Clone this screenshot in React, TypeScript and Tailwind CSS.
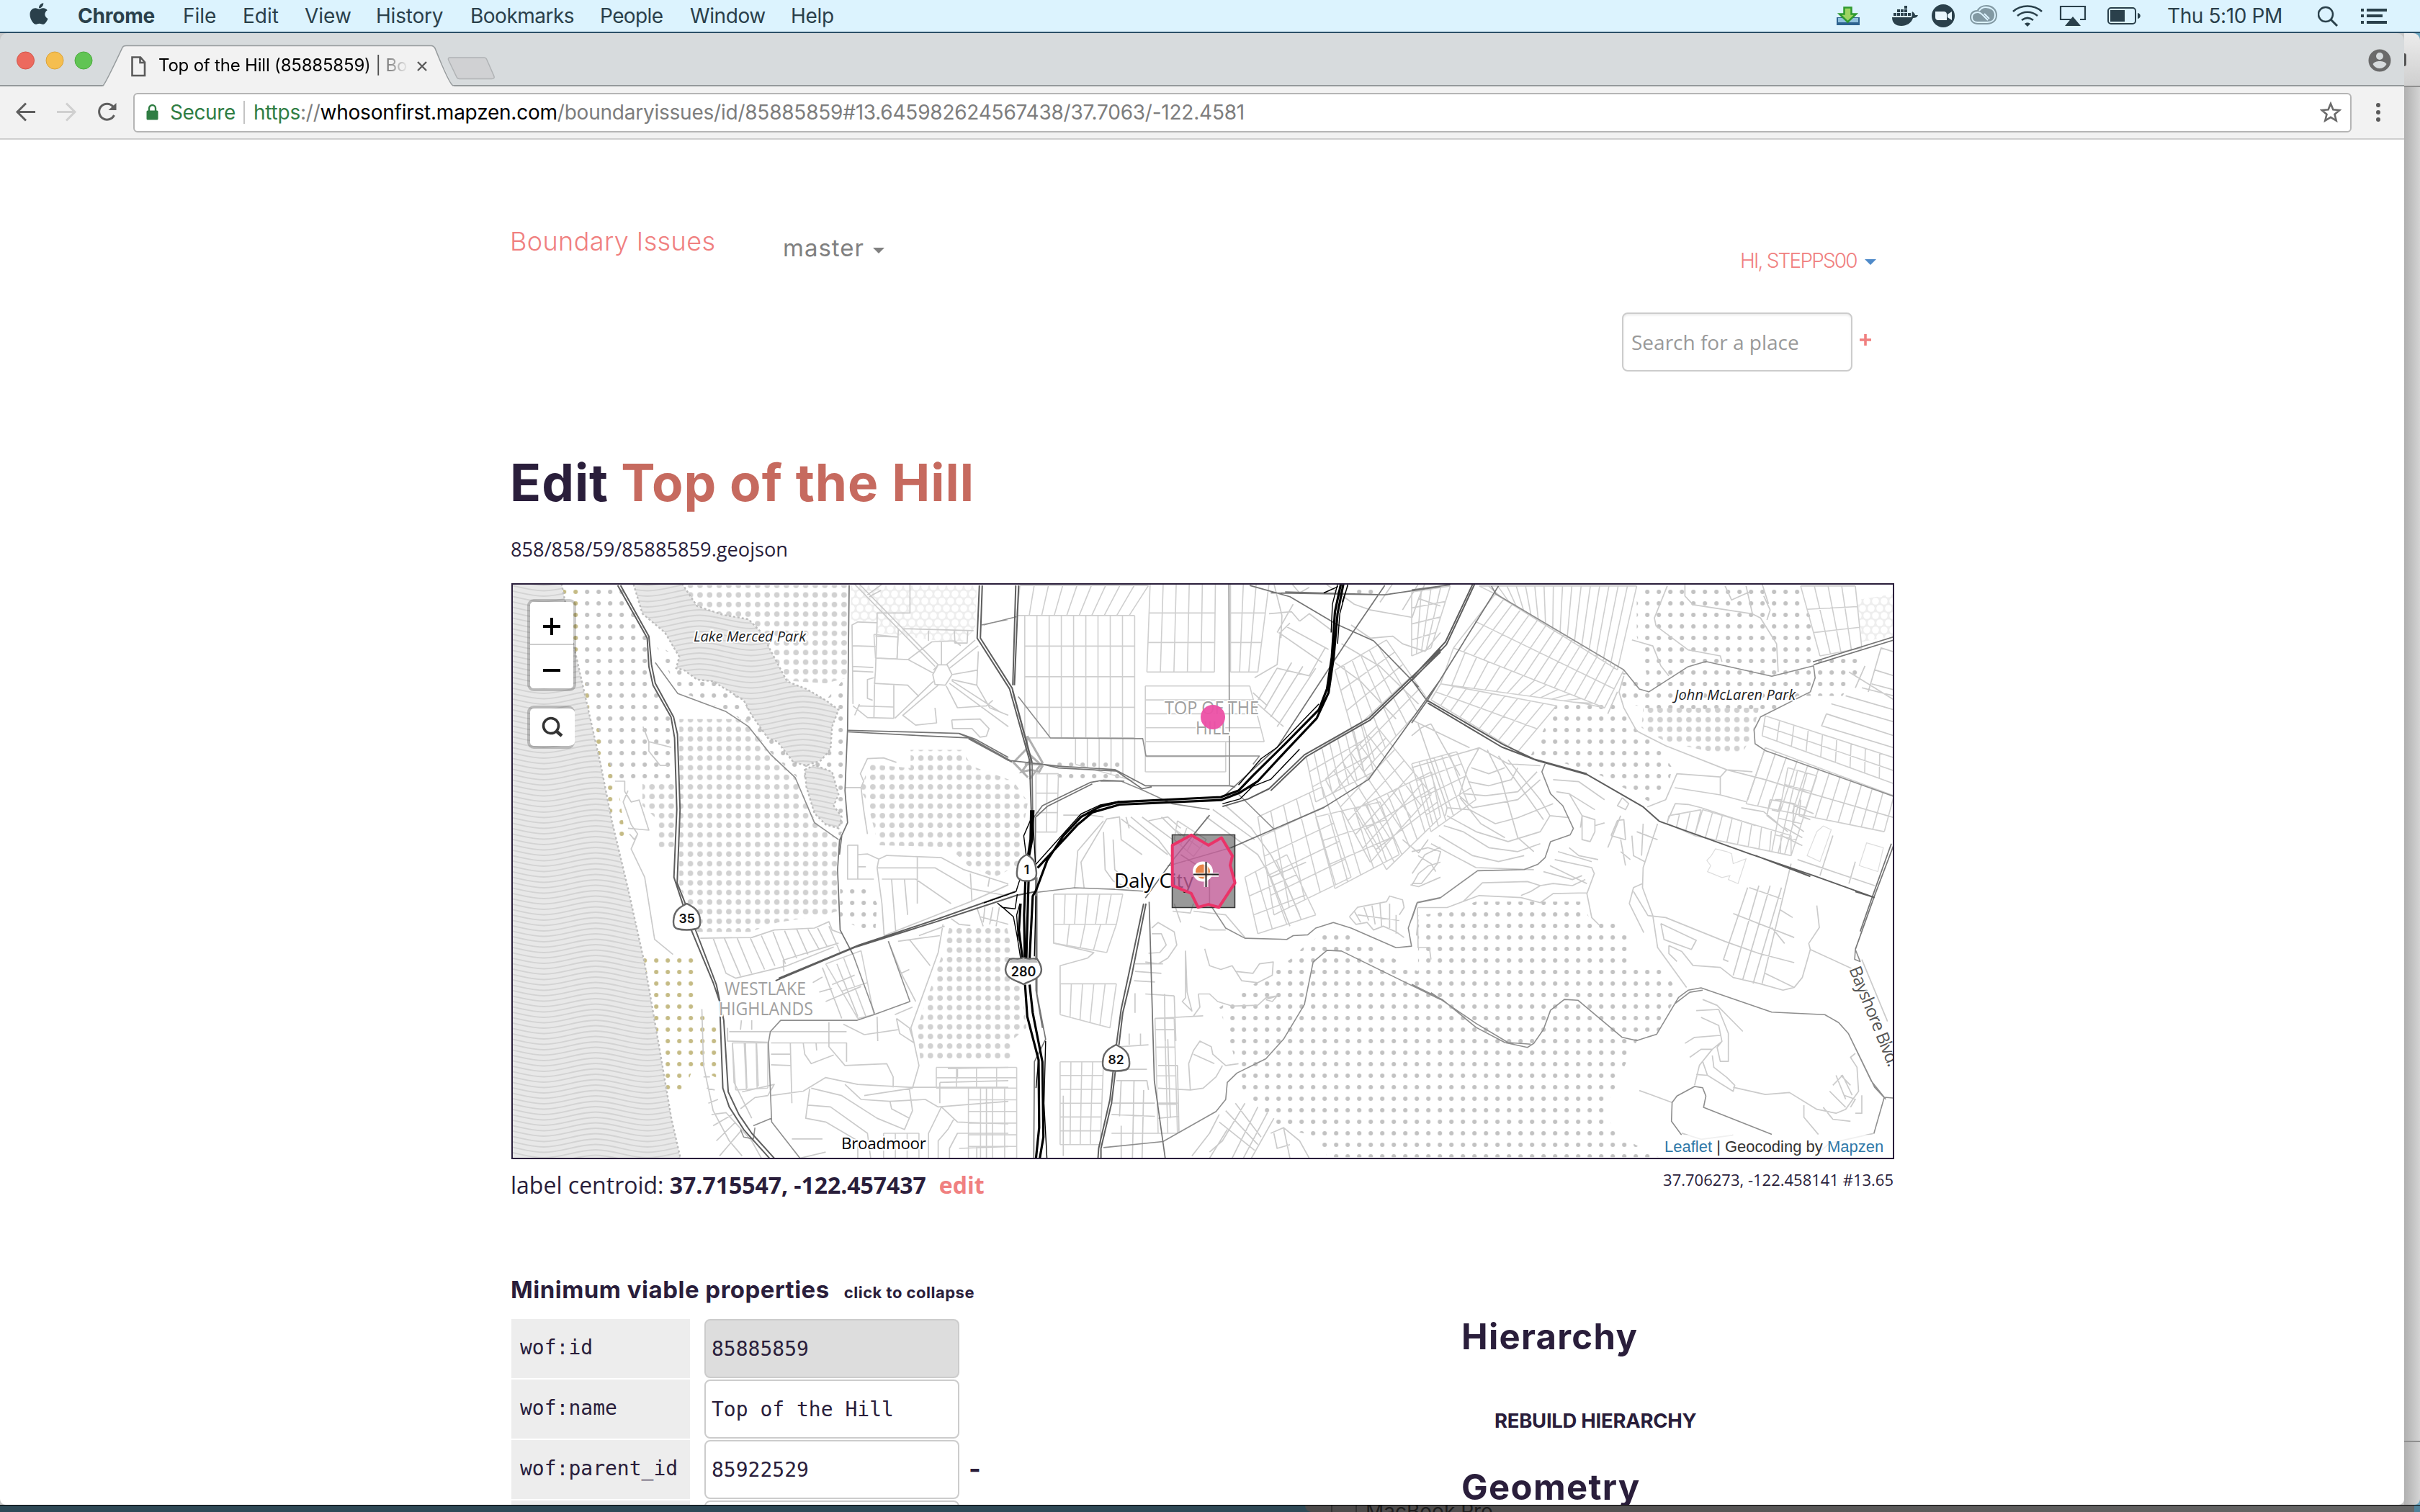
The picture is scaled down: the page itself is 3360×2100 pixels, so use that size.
import React from "react";
import { FaApple } from "react-icons/fa";

type Frame = [number, number, number, number];
type Pt = [number, number];

/* Survey sheets: origin and scale of each sheet on the page */
const W: Frame = [700, 800, 0.4464, 0.523];
const M: Frame = [1300, 800, 0.4464, 0.523];
const E: Frame = [1960, 800, 0.4464, 0.5548];

const project = (f: Frame, p: Pt): Pt => [f[0] + p[0] * f[2], f[1] + p[1] * f[3]];
const parse = (s: string): Pt[] =>
  s.trim().split(/\s+/).map((q) => q.split(",").map(Number) as Pt);
const toPath = (pts: Pt[]) =>
  "M" + pts.map((p) => p[0].toFixed(1) + " " + p[1].toFixed(1)).join("L");
const lines = (f: Frame, s: string) =>
  s.split("|").map((l) => toPath(parse(l).map((p) => project(f, p)))).join("");
const area = (f: Frame, s: string) =>
  s.split("|").map((l) => toPath(parse(l).map((p) => project(f, p))) + "Z").join("");

/* Street blocks: corners clockwise, then number of columns and rows */
const mix = (a: Pt, b: Pt, t: number): Pt => [a[0] + (b[0] - a[0]) * t, a[1] + (b[1] - a[1]) * t];
const blocks = (f: Frame, list: [string, number, number][]) =>
  list
    .map(([s, n, m]) => {
      const [a, b, c, d] = parse(s).map((p) => project(f, p));
      let out = "";
      for (let i = 0; i <= n; i++) out += toPath([mix(a, b, i / n), mix(d, c, i / n)]);
      for (let j = 0; j <= m; j++) out += toPath([mix(a, d, j / m), mix(b, c, j / m)]);
      return out;
    })
    .join("");

const minorW = lines(
  W,
  `1262,20 1262,98 1160,98|1085,340 1082,130 1100,122 1160,124 1160,98|1160,124 1155,250 1152,285 1150,375|1082,185 1155,187|1082,240 1148,243|1082,252 1148,255|1155,160 1225,162|1226,140 1222,220|1155,218 1256,222 1330,175 1400,172 1420,185|1085,345 1130,376 1212,378|1212,290 1212,378|1150,285 1255,290 1290,320|1100,345 1212,348|1090,370 1105,340|1150,270 1130,275 1130,325 1146,330|1240,140 1460,145|1320,145 1320,172|1400,145 1402,178 1440,178 1442,145|1360,172 1360,235|1256,222 1335,258|1375,236 1465,170|1385,245 1475,185|1392,262 1470,250|1392,275 1470,290 1475,200|1335,280 1215,378|1350,290 1240,370 1280,396 1345,390 1340,350|1375,292 1410,350 1500,345 1520,330|1385,285 1568,400|1392,278 1540,360|1470,290 1510,350 1568,370|1090,22 1340,240|1105,22 1350,236|1130,50 1175,22|1135,55 1172,38|1335,250 1350,236 1378,236 1393,262 1372,290 1340,288 1333,262 1350,236|1392,382 1480,380 1508,405 1500,425 1480,428 1455,405 1395,405 1392,382|1060,562 1110,562 1118,545 1108,525 1130,485 1180,483 1220,495|1110,562 1118,620 1130,685|1068,715 1100,715 1100,805 1068,805 1068,715|1100,740 1130,738 1165,752 1190,742 1360,748 1430,780 1568,818|1165,752 1160,775 1340,775 1450,830 1568,850|1160,775 1175,870 1182,955 1450,865 1568,820|1175,805 1280,805 1390,870|1205,805 1218,945|1245,805 1255,900|1285,745 1285,870|1450,790 1455,865|1510,800 1505,825|1100,772 1125,772|1068,805 1150,805|610,962 770,960 840,940 965,935 1010,918 1020,940 1050,950|650,962 690,1055 720,1068 880,1035 1025,985|685,962 735,1062|725,962 770,1055|765,960 810,1045|800,955 842,1035|835,942 875,1030|872,942 910,1015|910,938 945,1005|945,938 980,992|975,935 1005,985|1010,930 1045,1000|870,1050 868,1020 1040,975|960,1080 990,1065|980,1105 1020,1095|1000,1130 1110,1090|990,1040 1050,1175|1035,1030 1100,1170|1020,1085 1090,1060|695,1200 695,1235 820,1238|700,1210 1065,1210|738,1180 735,1205|770,1180 770,1205|710,1240 715,1345 770,1440|750,1240 755,1360|785,1240 790,1355|890,1240 895,1400|830,1270 890,1270|830,1298 890,1300|830,1240 1065,1240 1065,1290|1010,1185 1010,1250 1060,1300 1190,1295 1210,1330 1210,1358|930,1240 935,1270 955,1295 1025,1272|970,1240 972,1260|1055,1190 1120,1218 1225,1205|1160,1170 1162,1235|740,1370 840,1350 820,1380 780,1385 735,1415|830,1380 930,1368 1000,1332 1100,1350 1260,1358 1568,1358|950,1362 938,1440 1000,1450 1100,1500 1100,1546|945,1405 1015,1410 1130,1480 1140,1546|1060,1350 1110,1390 1200,1395 1310,1390 1350,1410 1568,1395|955,1360 1050,1380 1160,1440 1245,1470 1270,1420 1260,1360|1200,1395 1205,1415 1260,1440|1120,1380 1270,1360 1290,1300 1265,1200 1350,1000 1365,925|1320,1546 1320,1480 1360,1410 1410,1450 1568,1455|1350,1546 1350,1500 1380,1470 1400,1440|1385,1546 1385,1520 1410,1480 1568,1480|1415,1520 1568,1515|1470,1546 1470,1515|1500,1546 1500,1360|1380,1308 1568,1305|1410,1308 1410,1335|1355,1345 1568,1340|1355,1345 1355,1400|615,1150 620,1300 650,1420 700,1500 740,1540|620,1330 640,1330|630,1360 655,1365|635,1400 665,1390|645,1430 690,1425 770,1500 800,1546|650,1460 710,1430|660,1500 720,1450|670,1540 740,1470|895,1495 990,1495|920,1546 1000,1530|1195,970 1235,1055 1260,1045|1260,965 1325,1035|1290,955 1370,930 |1225,970 1355,955|1220,1175 1260,1200 1275,1240 1230,1215 1220,1175|1215,1165 1270,1145|1235,1055 1280,1130|1470,880 1490,930|1495,880 1490,920|1520,880 1510,925|1540,880 1530,930|1480,905 1568,925|1390,910 1415,925 1450,928|432,400 450,440 520,455|450,440 450,465 485,503 512,503|345,545 375,545 375,572 395,600 420,595 450,675 385,670|385,570 370,600 395,660 415,685 405,700 390,685|415,685 395,725 437,800 468,965 525,1005`
);
const minorM = lines(
  M,
  `1050,20 1075,105 1072,165|1035,100 1105,95 1130,120|1105,20 1130,45 1160,30|1130,120 1160,100 1230,145|990,270 1060,235 1070,150 1100,125|1110,75 1060,150|1065,150 1200,230|1090,135 1220,195|1000,330 1060,245 1160,265 1210,190|1020,355 1105,230|1040,375 1140,240|1060,400 1180,245|1000,340 1080,400|985,310 1030,345|365,845 365,975 490,1000 470,1015 385,1035 385,1160|395,635 480,635 520,640|430,830 440,730 520,650|460,830 450,760 530,645 570,640 575,700 640,740|520,680 525,780 550,810 600,830|550,700 555,780 600,815 640,830|575,645 720,740|605,640 690,700 730,745|640,640 735,700|600,670 590,640|660,650 720,640 760,670|700,640 760,690|840,640 1000,740 1040,800 1100,930|860,620 990,700|900,610 980,670 1040,740 1090,820 1130,900|735,890 790,895 800,870|760,920 740,870|800,890 900,900 960,960|820,930 850,940 900,940|670,935 690,920 740,945 748,980 720,1015 690,1030 650,1025|670,950 700,950 715,980 695,1000 660,1002|618,1030 705,1030|618,1050 700,1055|615,1075 680,1078|775,995 775,1120 765,1130 795,1155 780,1105 775,995|835,990 850,1035 885,1045 920,1035 950,1075 1000,1080 1045,1060 1048,1025 1005,1030 985,1055 930,1050|815,1110 850,1110 875,1130 920,1142 1000,1140 1025,1120 1060,1115|815,1110 820,1145 800,1168|1025,1125 1060,1115 1045,1130 1025,1125|618,1108 618,1160|650,1110 740,1115|710,1110 712,1235|740,1115 745,1235|680,1175 830,1168|680,1205 740,1205|785,1295 800,1260 820,1235 855,1250 860,1270 900,1300 940,1295|785,1295 790,1365 830,1360 870,1330 890,1300|800,1270 865,1295|690,1300 750,1300 755,1480|720,1230 728,1440|690,1360 790,1365|690,1400 750,1400|690,1440 755,1435|560,1340 655,1340 660,1365|545,1430 680,1435|545,1400 680,1400|570,1250 660,1245|600,1215 600,1245|635,1215 635,1245|570,1310 655,1310|575,1340 570,1435|615,1340 610,1546|645,1365 640,1546|575,1460 575,1546|545,1480 690,1480|795,1540 850,1480 880,1430|850,1546 905,1470|880,1450 990,1525|900,1420 1000,1510|930,1400 1010,1490|960,1400 890,1500 850,1530|1000,1410 920,1546|1030,1425 955,1546|1050,1440 980,1546|1040,1480 1080,1465 1130,1500 1160,1546|1080,1465 1100,1546|1050,1480 1060,1520 1100,1510|1210,20 1300,75 1350,90 1480,110 1500,60 1568,80|1380,70 1420,20|1450,90 1500,20|1500,60 1520,20|1290,130 1350,165 1420,160 1450,180 1520,200 1568,150|1240,230 1320,280 1430,380|1260,180 1380,240 1500,340|1285,905 1310,880 1400,865 1410,850 1450,860 1455,880 1440,900|1285,905 1305,925 1340,920 1360,940 1390,930 1430,945 1455,960|1300,890 1320,920|1330,880 1345,915|1355,875 1365,925|1380,870 1385,930|1410,870 1410,935|1430,900 1430,950|1310,900 1440,915|1480,820 1500,790 1530,770 1568,760|1475,820 1500,825 1568,800|1480,790 1520,740 1568,720|1450,700 1500,735 1530,700|1040,800 1150,760|395,1380 395,1540`
);
const minorE = lines(
  E,
  `0,480 210,430 300,470 400,475|210,430 175,480 148,550 190,580 330,560 400,510|185,480 240,495 290,480|175,515 240,525 310,510 330,480|160,545 230,550 330,540 390,490|235,435 275,500 330,655 380,690|270,450 340,530 410,610|300,460 400,560 430,600|150,555 215,620 290,655|110,580 180,585 260,620 330,605 440,570|110,600 200,640 300,665 400,640 430,600|100,625 160,640 240,680 330,690 400,670|85,650 190,700 270,715 350,700|60,670 200,730 380,735|0,690 50,680 90,690 80,720 30,770 0,770|20,700 60,720 75,740|0,400 30,380 60,370|0,360 180,430|20,370 110,580 105,600|60,370 150,500|440,510 520,515 600,560|450,540 490,545 570,585|490,545 530,600 525,630|530,600 530,660 555,665 570,640 570,610 530,600|570,625 600,618|430,600 490,605|455,690 560,715|445,710 560,730 568,745 545,795 560,855 585,875|430,725 545,770|410,740 500,760 530,750|490,680 520,700 580,710|20,830 110,830 210,800 340,805 400,818 440,795 545,793|160,815 220,768 360,765 400,775 440,770 500,775 540,760|340,800 370,790 400,775|655,555 675,570 665,585 640,575 655,555|620,650 640,612 660,610 665,660 620,650|610,680 650,600|650,660 665,725|685,650 690,700 725,715|700,640 765,660|720,620 715,700|650,690 680,710|765,620 720,730 718,780 750,850 765,930 855,1030|718,770 690,780 677,820 722,893|690,790 735,850 790,855 975,915 1080,945 1190,968|775,870 885,912 870,935 785,910 775,870|800,925 840,940 875,975 960,980 1000,1005 1080,1020 1155,1037 1190,1030 1215,1005 1240,935 1235,920 1268,880 1260,825|1240,935 1375,985|800,925 800,945 825,965|980,485 1100,510 1200,535 1330,565 1500,605|980,485 1060,490|818,530 960,548 1040,565|733,578 790,560 825,495 960,503 960,548|960,503 980,485|795,615 820,570 860,572 900,580 1070,625|1025,580 1095,590 1140,620|1045,560 1100,430|1000,845 1190,905|1050,780 1150,808|1045,780 970,960 985,965|1080,775 1000,1000|1115,775 1030,1010|1150,780 1062,1020|1180,720 1090,1020|1145,835 1185,855|1120,880 1160,920|1100,995 1190,1030|1200,710 1440,775|1380,715 1360,770|1310,650 1270,750|885,1088 955,1085 985,1145 985,1215 960,1215 950,1180 965,1165 955,1125 900,1105|905,1060 950,1075 1030,1140|850,1170 880,1155 960,1150|865,1205 900,1185 935,1185 965,1165|880,1275 895,1225 935,1185|885,1248 920,1250 1000,1290 1005,1275 980,1255 940,1230 935,1200|905,1215 920,1250|1000,1280 1100,1298 1175,1293 1260,1335 1320,1345 1350,1335 1390,1290 1385,1230 1365,1205 1380,1195|1310,1275 1340,1250 1370,1300|1320,1250 1350,1310|1300,1290 1350,1330|1335,1250 1365,1275|1345,1300 1380,1310 1365,1330|1280,1330 1310,1360 1365,1365|1400,1300 1400,1345 1380,1345|1220,1325 1220,1355 1265,1398|708,1288 810,1318|840,1395 900,1410 1000,1400|1250,1455 1300,1420 1440,1395 |1400,960 1480,1115|1115,560 1105,600 1170,640|1115,560 1190,570 1185,620 1220,640|1130,560 1150,560 1140,590 1120,585|1190,575 1250,595|1210,560 1205,600 1240,610|1160,630 1215,655|1150,650 1215,675|1290,345 1500,400|1290,345 1275,375 1500,430|1305,320 1500,365|1350,300 1500,335|1360,240 1500,310|1380,280 1410,225|1440,235 1500,250|1430,270 1500,285|1400,280 1500,300|1420,290 1460,180 1500,190|850,20 850,50 875,72 1060,95 1085,105 1135,170 1140,240|795,25 755,105 760,125 860,185 960,200 965,215|685,160 750,175 775,225 800,250|1060,95 1040,25|975,25 995,60 1050,40|1095,50 1115,85 1105,110|1090,20 1110,70|660,250 645,290 660,330 700,388 790,425 980,485|640,290 610,345|18,830 20,930 55,930 60,960|20,860 15,900`
);
const grids =
  blocks(M, [
    ["275,105 617,105 617,430 275,430", 9, 4],
    ["433,430 617,430 617,545 433,500", 5, 1],
    ["665,20 868,20 865,255 655,255", 5, 3],
    ["915,20 1035,20 1000,255 915,255", 3, 3],
    ["650,292 975,292 1020,440 650,440", 1, 4],
    ["650,440 900,440 900,520 650,520", 1, 2],
    ["260,25 660,25 600,105 250,105", 9, 1],
    ["365,845 580,845 560,925 365,925", 6, 1],
    ["365,925 560,925 530,1000 365,975", 4, 1],
    ["385,1083 560,1083 540,1200 385,1165", 5, 1],
    ["385,1290 520,1290 510,1510 385,1510", 4, 6],
    ["0,1305 250,1305 250,1360 0,1360", 4, 2],
    ["100,1360 250,1360 250,1546 100,1546", 4, 6],
    ["1000,640 1200,560 1290,800 1050,900", 5, 5],
    ["1210,540 1370,400 1540,580 1350,760", 6, 6],
    ["1240,250 1400,170 1530,330 1330,520", 6, 5],
    ["1150,480 1320,390 1360,520 1180,600", 7, 3],
    ["1300,620 1540,520 1568,640 1400,780", 7, 3],
    ["1180,640 1380,600 1440,740 1240,830", 5, 3],
    ["310,525 380,525 375,680 310,680", 2, 3],
    ["960,800 1090,740 1180,900 1000,950", 4, 3],
    ["680,1175 740,1175 750,1480 690,1480", 2, 4],
    ["750,650 840,700 800,745 740,700", 3, 2],
  ]) +
  blocks(E, [
    ["260,45 660,235 600,330 130,180", 15, 2],
    ["210,25 700,25 640,235 260,45", 17, 1],
    ["130,180 600,330 540,320 90,270", 13, 1],
    ["90,270 450,325 330,440 60,310", 9, 2],
    ["0,470 140,440 200,560 60,640", 6, 4],
    ["0,40 120,25 60,180 0,200", 4, 4],
    ["1210,25 1380,25 1400,180 1270,200", 4, 3],
    ["1100,350 1500,455 1500,520 1090,400", 9, 2],
    ["1100,430 1500,550 1470,640 1040,570", 12, 1],
    ["800,600 900,585 880,650 795,620", 3, 1],
    ["905,585 1180,650 1180,700 880,650", 9, 1],
    ["1170,480 1260,500 1180,700 1120,690", 3, 5],
  ]) +
  blocks(W, [
    ["1150,155 1225,162 1222,220 1155,218", 1, 1],
    ["710,1240 820,1240 820,1360 720,1365", 3, 1],
    ["1000,1030 1110,995 1150,1165 1100,1175", 2, 2],
    ["1180,1480 1290,1480 1290,1546 1180,1546", 3, 1],
  ]);

const tertiary =
  lines(W, `470,230 540,312 690,360 760,400 830,475 905,535 965,655 1040,700|1195,970 1262,1130 1150,1165 1098,1180 860,1180 828,1210 822,1240 832,1450 920,1546|1085,1005 1152,1162|775,1460 832,1440|1485,130 1568,115|735,1470 745,1490 775,1495 780,1465`) +
  lines(M, `255,320 355,430 642,432 652,478 1005,478 985,500|910,20 912,555|147,130 250,108|850,870 900,935 960,962 1090,965 1110,955 1155,953 1180,935 1235,920 1290,935 1430,987 1478,983 1468,935 1495,868 1568,855|510,545 575,545 640,568 735,605 850,620|315,840 430,828 555,832 660,838|520,1518 705,1502 870,1422 900,1390 905,1345 935,1320 1025,1282 1080,1230 1145,1138 1172,1025 1215,994 1260,996 1568,1125|940,580 1050,672|760,740 850,790 850,870|720,770 915,722`) +
  lines(E, `0,1022 95,1060 200,1130 290,1168 360,1180 380,1170 410,1135 432,1087 475,1060 517,1062 655,1155 700,1163 762,1147 830,1055 860,1037 900,1031 1120,1092 1285,1098 1328,1118 1358,1145 1430,1265 1470,1305 1500,1307|60,1043 200,1120 300,1168 370,1172|820,1070 865,1042 905,1037|1358,1145 1440,1280 1475,1310|1470,1305 1438,1395 |840,1400 808,1365 810,1318 825,1302 880,1278 905,1281 915,1302 908,1330 1120,1398|248,25 262,45 660,235 708,283 738,290 860,227 915,214 1120,251 1250,225 1255,255 1240,290 1085,353 1065,385 1068,420 1100,437 1500,552|415,470 405,490 432,545 470,575 503,632 493,648 432,665 415,705 392,722 350,735 205,738 90,805 18,817 0,860|1380,935 1395,965 1378,960 1380,935`);

const secondary =
  lines(W, `1073,25 1068,405 1060,570 1068,655 1043,702 1037,780 1045,940 1085,1005|1050,690 1043,740|1070,410 1415,418 1465,433 1568,482|1070,414 1300,424 1445,430 1568,490`) +
  lines(M, `72,419 105,430 230,490 290,496 380,505 555,514 650,557 912,557 930,560|100,432 235,494|330,500 380,510 560,518 640,565 670,560|300,645 330,610 480,548 520,542 585,545|310,640 345,612 485,552|662,865 678,1340 712,1546|1568,275 1345,540 1205,615 1050,672 915,722|1395,25 1295,150 1060,455 900,580|975,25 1100,55 1245,128 1360,172 1500,295|1040,45 1395,50 1568,28|1085,42 1395,50|850,635 735,755 650,855|300,640 298,500 237,305|313,800 313,1110 340,1230 305,1290 303,1546|308,640 310,1100 330,1200`) +
  lines(E, `270,25 50,310 0,368|1500,672 1440,800 1380,935|1492,670 1432,805 1395,890|1248,215 1500,152|1250,222 1500,160|0,260 50,315|0,35 120,22`);

const primary =
  lines(W, `353,25 445,165 450,240 463,290 519,375 530,430 537,620 528,800 582,940 650,1080 670,1130 680,1360 700,1410 745,1470 825,1546|362,25 450,160 458,235 470,285 527,375 539,420 547,620 538,815 593,935 660,1085 683,1180 697,1370 730,1430 770,1480 840,1546`) +
  lines(M, `134,25 127,165 228,300 290,490 296,640|143,25 137,165 236,298 298,495|247,25 238,290|256,25 243,290|-500,1075 -250,985 0,918 250,848 310,838|-490,1068 -240,980 0,912 245,838|645,870 598,1060 575,1150 560,1245|652,870 608,1060 580,1160 568,1245|550,1315 540,1390 505,1520 503,1546|557,1315 545,1400 512,1520 512,1546|1568,195 1345,378 1145,475 1035,565 970,592 890,612|1568,202 1350,382 1150,480 1040,570`) +
  lines(E, `190,20 105,165 0,255|196,20 108,172 0,262|50,318 280,428 390,462 545,497 720,578 770,614 1050,695 1250,750 1440,805|50,312 285,422 380,458 545,495|1070,700 1240,752|1380,790 1440,805`);

const highway = lines(
  M,
  `1258,22 1240,95 1230,215 1215,300 1190,355 1080,450 985,530 940,570 885,587 570,600 510,612 450,640 395,690 345,755 310,835 300,850 290,1015|1266,22 1248,100 1236,215 1220,310 1183,378 1090,462 1000,545 945,575 885,595 570,607 485,628 440,660 315,775|295,622 293,700 285,745|302,622 298,700 285,760|277,808 273,900 275,1015|287,808 280,1015|262,870 257,940 268,1015|276,1085 283,1170 318,1285 320,1465 310,1546|290,1085 300,1160 330,1290 333,1490 322,1546`
);
const ramps = lines(
  M,
  `1248,22 1232,75 1228,150|1280,22 1255,100 1248,180|305,770 450,632 510,608 570,598|1190,340 1060,455 1010,485 940,555|1280,25 1262,70|1205,45 1250,28|945,572 1040,540 1130,460|890,605 945,592 1000,545|148,868 248,838 262,800|190,868 205,880 245,884 252,845|200,875 240,905 252,960 262,1015|260,870 250,900 255,970|297,640 272,690 280,745|300,640 308,760|310,850 305,1010|340,1235 335,1400 344,1546|310,1546 303,1546|318,1285 310,1360`
);
const links = lines(M, `283,425 280,460 240,495 285,535|283,425 330,495 290,540|285,470 330,505 320,520 295,515 265,520 300,480|275,500 330,500`);

const UI = "font-['Inter',sans-serif]";

function Shield({ x, y, w, label }: { x: number; y: number; w: number; label: string }) {
  const h = w / 2;
  return (
    <g transform={`translate(${x} ${y})`}>
      <path
        d={`M0 -19C8 -15 ${h - 3} -10 ${h - 2} 1C${h} 12 ${h - 3} 15 ${h - 7} 16C6 18 -6 18 ${7 - h} 16C${3 - h} 15 ${-h} 12 ${2 - h} 1C${3 - h} -10 -8 -15 0 -19Z`}
        fill="#fff"
        stroke="#666"
        strokeWidth="2.4"
      />
      <text y="7.500" textAnchor="middle" fontFamily="Inter, sans-serif" fontSize="17.500" fontWeight="600" fill="#111">
        {label}
      </text>
    </g>
  );
}

function CityMap() {
  return (
    <svg className="block h-full w-full" viewBox="712 812 1916 796" preserveAspectRatio="none">
      <defs>
        <pattern id="waves" x="683" y="1580" width="144" height="30" patternUnits="userSpaceOnUse">
          <rect width="144" height="30" fill="#e8e8e8" />
          {[-7.5, 0, 7.5, 15, 22.5, 30, 37.5].map((y) => (
            <path
              key={y}
              transform={`translate(0 ${y})`}
              d="M-2 -5.5C26 -5.5 46 5.5 72 5.5S118 -5.5 146 -5.5"
              fill="none"
              stroke="#d3d3d3"
              strokeWidth="1.9"
            />
          ))}
        </pattern>
        <pattern id="big" x="5.5" y="6.5" width="13.33" height="13.33" patternUnits="userSpaceOnUse">
          <circle cx="6.67" cy="6.67" r="3.8" fill="#d1d1d1" />
        </pattern>
        <pattern id="small" x="7.2" y="-2" width="16" height="16" patternUnits="userSpaceOnUse">
          <circle cx="8" cy="8" r="3" fill="#c2c2c2" />
        </pattern>
        <pattern id="sand" x="7.2" y="-2" width="16" height="16" patternUnits="userSpaceOnUse">
          <circle cx="8" cy="8" r="3" fill="#c5bb85" />
        </pattern>
        <pattern id="comb" width="12" height="20" patternUnits="userSpaceOnUse">
          <rect width="12" height="20" fill="#eeeeee" />
          <circle cx="6" cy="5" r="4.8" fill="#fff" />
          <circle cx="0" cy="15" r="4.8" fill="#fff" />
          <circle cx="12" cy="15" r="4.8" fill="#fff" />
        </pattern>
      </defs>
      <rect x="700" y="800" width="1940" height="820" fill="#fff" />
      <path fill="url(#comb)" d={area(W, "1078,25 1470,25 1465,140 1420,180 1160,150 1160,120 1080,120") + area(E, "1385,60 1500,45 1500,150 1400,165")} />
      <path
        fill="url(#small)"
        d={
          area(W, "235,25 368,25 445,165 463,290 519,375 530,540 335,540 300,450 250,300 225,180|470,180 540,215 535,245 650,280 745,330 850,440 900,495 985,490 1015,460 1040,355 1000,330 1060,270 1065,655 1045,690 965,640 940,560 905,530 830,470 760,395 690,355 540,305|1045,825 1130,825 1160,870 1155,935 1110,940 1045,905") +
          area(M, "350,492 580,494 590,545 380,535") +
          area(E, "20,850 110,840 200,815 530,815 560,870 640,870 670,900 680,980 780,985 830,1040 762,1147 700,1165 660,1230 600,1340 640,1400 770,1455 -260,1455 -310,1400 -420,1380 -520,1300 -560,1180 -598,1080 -378,960 -338,930 -248,877 -120,930 20,990|730,25 1200,25 1250,120 1250,210 1390,200 1390,240 1340,300 1200,300 1090,350 720,330 650,310 650,240 735,260 700,150 700,60|450,320 640,315 700,385 760,420 810,480 800,520 740,565 590,500 480,470 370,450") +
          area(M, "1305,25 1365,25 1365,50 1305,50")
        }
      />
      <path
        fill="url(#big)"
        d={
          area(W, "555,25 1068,25 1068,270 1000,285 880,278 830,200 760,115 680,103 600,80|545,380 755,380 830,475 905,535 970,655 1035,700 1035,890 1000,900 850,920 765,945 600,945 545,820|430,550 530,550 530,720 480,720 480,650 430,610") +
          area(M, "-80,462 80,462 110,505 240,545 285,600 268,680 275,760 180,800 100,770 40,720 -180,715 -215,600 -235,570 -210,500 -80,510|40,935 220,935 245,1020 265,1080 280,1200 240,1230 230,1282 -50,1282 -60,1200 20,1000") +
          area(E, "720,330 1080,330 1060,400 1030,440 930,440 790,415 715,380")
        }
      />
      <path fill="url(#sand)" d={area(W, "180,25 235,25 240,250 308,450 355,560 378,700 355,700 335,650 300,500 255,330 215,180|430,1015 600,1015 600,1140 660,1190 665,1335 590,1300 560,1370 500,1370")} />
      <g fill="url(#waves)" stroke="#bdbdbd" strokeWidth="2.4" strokeDasharray="3 3">
        <path d={area(W, "0,10 176,10 190,70 215,180 255,330 300,500 335,650 385,830 437,1030 480,1240 520,1440 552,1560 0,1560")} />
        <path d={area(W, "398,10 545,10 600,80 680,103 760,115 800,150 830,200 880,280 940,300 1000,330 1040,355 1020,400 1015,460 985,490 940,503 900,495 850,440 820,430 770,370 745,330 650,280 600,275 560,250 535,245 545,215 500,150 430,100|935,515 965,502 1020,520 1040,580 1025,610 1050,640 1040,670 1000,660 965,630 940,560")} />
      </g>
      <g fill="none" strokeLinejoin="round">
        <path d={minorW + minorM + minorE} stroke="#cbcbcb" strokeWidth="1.7" />
        <path d={grids} stroke="#cfcfcf" strokeWidth="1.6" />
      </g>
      <path d={area(E, "980,690 995,695 1000,720 1040,708 1015,770 985,760 990,750 965,755 920,740 930,725 918,712 932,700 945,683|1230,700 1260,640 1280,626 1305,635 1270,715|1415,668 1467,680 1450,740 1392,725")} fill="none" stroke="#ddd" strokeWidth="1.2" />
      <path d={links} fill="none" stroke="#b0b0b0" strokeWidth="3" />
      <path d={tertiary} fill="none" stroke="#8e8e8e" strokeWidth="1.6" strokeLinejoin="round" />
      <path d={secondary} fill="none" stroke="#757575" strokeWidth="1.7" strokeLinejoin="round" />
      <path d={primary} fill="none" stroke="#5e5e5e" strokeWidth="2" strokeLinejoin="round" />
      <path d={ramps} fill="none" stroke="#000" strokeWidth="1.4" strokeLinejoin="round" />
      <path d={highway} fill="none" stroke="#000" strokeWidth="3.2" strokeLinejoin="round" />

      <Shield x={953.6} y={1274} w={40} label="35" />
      <Shield x={1425.4} y={1206} w={30} label="1" />
      <Shield x={1549.6} y={1470} w={40} label="82" />
      <path d="M1402 1332C1408 1330 1414 1334 1421 1330C1428 1334 1434 1330 1440 1332C1449 1345 1446 1352 1442 1356C1436 1362 1428 1363 1421 1367C1414 1363 1406 1362 1400 1356C1396 1352 1393 1345 1402 1332Z" fill="#fff" stroke="#666" strokeWidth="2.4" />
      <path d="M1403 1333C1408 1331 1414 1335 1421 1331C1428 1335 1434 1331 1439 1333L1441 1337H1401Z" fill="#bbb" />
      <text x="1421" y="1356" textAnchor="middle" fontFamily="Inter, sans-serif" fontSize="18" fontWeight="600" fill="#111">280</text>

      <g fontFamily="'Open Sans', sans-serif" stroke="#fff" strokeWidth="4" strokeLinejoin="round" paintOrder="stroke">
        <g fontSize="20" fontStyle="italic" fill="#222">
          <text x="963" y="891" textLength="156">Lake Merced Park</text>
          <text x="2325" y="972" textLength="168">John McLaren Park</text>
        </g>
        <g fontSize="25" fontWeight="400" fill="#a0a0a0">
          <text x="1006" y="1382" textLength="113" lengthAdjust="spacingAndGlyphs">WESTLAKE</text>
          <text x="998" y="1410" textLength="131" lengthAdjust="spacingAndGlyphs">HIGHLANDS</text>
          <text x="1617" y="992" textLength="131" lengthAdjust="spacingAndGlyphs">TOP OF THE</text>
          <text x="1660" y="1020" textLength="47" lengthAdjust="spacingAndGlyphs">HILL</text>
        </g>
        <text x="1168" y="1596" fontSize="22.5" textLength="118" fill="#000">Broadmoor</text>
        <text x="1547" y="1233" fontSize="28" textLength="110" fill="#000">Daly City</text>
        <text transform="translate(2567 1346) rotate(68)" fontSize="24" textLength="148" fill="#555">Bayshore Blvd.</text>
      </g>

      <circle cx="1684" cy="996" r="17" fill="#ec4fa5" fillOpacity=".94" />
      <rect x="1627.5" y="1159.5" width="87" height="101" fill="#333" fillOpacity=".5" stroke="#333" strokeWidth="1.5" />
      <path d={area(M, "734,715 793,688 846,715 887,695 921,743 914,768 929,815 879,880 846,872 814,880 793,843 734,822")} fill="#f069b8" fillOpacity=".6" stroke="#ea3368" strokeWidth="4" strokeLinejoin="round" />
      <circle cx="1670" cy="1210.5" r="12" fill="#e88548" stroke="#fff" strokeWidth="4" />
      <path d="M1674.5 1198v34M1658 1215h34" stroke="#fff" strokeOpacity=".75" strokeWidth="6" />
      <path d="M1674.5 1197v35M1657 1214.5h35" stroke="#222" strokeWidth="2" />
    </svg>
  );
}

function MenuBar() {
  return (
    <div className={`${UI} flex h-[46px] border-b-2 border-[#2c5068] bg-[#dcf3fe] text-[28px] leading-[44px] text-[#2a404b]`}>
      <div className="w-[108px] pt-[2px] pl-[39px]"><FaApple size={34} className="ml-[-2px]" /></div>
      <div className="w-[146px] font-bold tracking-[-0.2px]">Chrome</div>
      <div className="w-[83px]">File</div>
      <div className="w-[86px]">Edit</div>
      <div className="w-[99px]">View</div>
      <div className="w-[131px] tracking-[-0.2px]">History</div>
      <div className="w-[180px] tracking-[-0.5px]">Bookmarks</div>
      <div className="w-[125px] tracking-[-0.6px]">People</div>
      <div className="w-[140px] tracking-[-0.4px]">Window</div>
      <div className="w-[1442px] tracking-[-0.3px]">Help</div>
      <svg className="h-[44px] w-[469px]" viewBox="2540 0 469 44" fill="#2a404b">
        <path d="M2550 24h32v11h-32z" fill="#2d628f" />
        <path d="M2552 25h28v6h-28z" fill="#8fc0dd" />
        <path d="M2560.500 10.500h10v9h6.500l-11.500 11-11.500-11h6.500z" fill="#9dd463" stroke="#2f9a2f" strokeWidth="2.500" />
        <path d="M2627 24h27c1-2 0-5 1-8 2 1 4 3 4 5h4c-1 3-4 4-7 4-2 7-9 11-16 11-8 0-13-4-13-12zM2629 18h4v4h-4zM2634 18h4v4h-4zM2639 18h4v4h-4zM2644 18h4v4h-4zM2649 18h4v4h-4zM2634 13h4v4h-4zM2639 13h4v4h-4zM2644 13h4v4h-4zM2644 8h4v4h-4z" />
        <circle cx="2698" cy="22" r="16" />
        <path d="M2687 16h12c2 0 4 1 4 4v8h-12c-3 0-4-2-4-4zM2704 20l6-4v12l-6-4z" fill="#e9f7fd" />
        <path d="M2758 7c9 0 15 6 15 14s-6 13-14 13h-13c-6 0-11-4-11-10s4-10 10-10c2-4 7-7 13-7z" fill="#8299a3" />
        <g fill="none" stroke="#dcf3fe" strokeWidth="1.900">
          <path d="M2757 10c7 0 13 4 13 11s-5 10-11 10h-13c-4 0-8-2-8-7s4-7 8-7c3 0 5 2 7 4l7 7" />
          <path d="M2748 15c2-3 5-5 9-5M2755 19l7 7" />
        </g>
        <g fill="none" stroke="#2a404b" strokeWidth="2.600">
          <path d="M2795 16c11-10 29-10 40 0M2801 22c8-7 20-7 28 0M2807 28c5-4 11-4 16 0" />
          <path d="M2875 27h-14V9h34v18h-7" strokeWidth="2.200" />
          <rect x="2927" y="11" width="38" height="22" rx="4" strokeWidth="2" />
        </g>
        <path d="M2811 33c2-2 6-2 8 0l-4 4zM2878 23l11 13h-22zM2930 14h20v16h-20zM2968 18c5 1 5 7 0 8z" />
      </svg>
      <div className="w-[209px] tracking-[-0.400px]">Thu 5:10 PM</div>
      <svg className="h-[44px] w-[142px]" viewBox="3218 0 142 44" fill="none" stroke="#2a404b" strokeWidth="2.500">
        <circle cx="3229" cy="20" r="10" />
        <path d="M3236 27l9 9" strokeWidth="3" />
        <path d="M3278 14h4M3286 14h28M3278 22h4M3286 22h22M3278 31h4M3286 31h28" strokeWidth="4" />
      </svg>
    </div>
  );
}

function TabStrip() {
  return (
    <div className="relative h-[74px] rounded-tl-[10px] rounded-tr-[10px] bg-[#d7dbdd]">
      <svg className="block h-[74px] w-[3338px]" viewBox="0 46 3338 74">
        <path d="M0 119H3338" stroke="#94999b" strokeWidth="2" />
        <circle cx="35.500" cy="84" r="12" fill="#ec6a5e" stroke="#d35549" />
        <circle cx="76" cy="84" r="12" fill="#f5be4f" stroke="#dba33a" />
        <circle cx="116" cy="84" r="12" fill="#61c454" stroke="#4cab3f" />
        <path d="M140 121L144 119 170 66Q171 63 175 63H599Q602 63 604 67L628 119 634 121Z" fill="#f2f2f2" />
        <path d="M143 119Q146 117 170 66Q171 63.500 175 63.500H599Q602 63.500 604 67Q624 117 629 119" fill="none" stroke="#979c9e" strokeWidth="1.600" />
        <path d="M625 80H672Q675 80 676 83L686 106Q687 109.500 683 109.500H638Q635 109.500 634 107L623 84Q621 80 625 80Z" fill="#d0d1d3" stroke="#b0b3b5" strokeWidth="1.500" />
        <path d="M183.500 79.500H195L201 86.500V105H183.500ZM194.500 79.500V87H201" fill="none" stroke="#5a5a5a" strokeWidth="2.600" />
        <path d="M580 86l12 12M592 86l-12 12" stroke="#5a5a5a" strokeWidth="2.400" />
        <circle cx="3304" cy="84" r="15.500" fill="#6a6a6a" />
        <circle cx="3304" cy="78" r="5" fill="#d7dbdd" />
        <path d="M3294.500 89c3-5.500 16-5.500 19 0-4 8-15 8-19 0z" fill="#d7dbdd" />
      </svg>
      <div className={`${UI} absolute top-[27px] left-[220px] w-[348px] overflow-hidden text-[24px] leading-[36px] tracking-[-0.200px] whitespace-nowrap text-black [mask-image:linear-gradient(to_right,black_82%,transparent_100%)]`}>
        Top of the Hill (85885859) | Bo
      </div>
    </div>
  );
}

function Toolbar() {
  return (
    <div className="flex h-[74px] items-center border-b-2 border-[#cfcfcf] bg-[#f2f2f2]">
      <svg className="h-[72px] w-[185px]" viewBox="0 120 185 72" fill="none" strokeWidth="3">
        <path d="M49 155.500H25M36 143.500L24 155.500 36 167.500" stroke="#5f5f5f" />
        <path d="M79 155.500H103M92 143.500L104 155.500 92 167.500" stroke="#d0d0d0" />
        <path d="M157 148A11 11 0 1 0 158.500 160" stroke="#5f5f5f" />
        <path d="M161.500 143v10h-11z" fill="#5f5f5f" />
      </svg>
      <div className={`${UI} flex h-[55px] w-[3080px] items-center rounded-[6px] border-2 border-[#b5b5b5] bg-white text-[28px] leading-[51px] whitespace-nowrap`}>
        <svg className="ml-[16px] h-[24px] w-[17px]" viewBox="0 0 17 24">
          <path d="M4 11V6.500a4.500 4.500 0 0 1 9 0V11" fill="none" stroke="#2f7d43" strokeWidth="2.400" />
          <rect x=".5" y="9.500" width="16" height="13" rx="1.500" fill="#2f7d43" />
        </svg>
        <span className="ml-[16px] w-[102px] pt-[1px] tracking-[-0.400px] text-[#2f7d43]">Secure</span>
        <span className="mr-[12px] h-[32px] w-[2px] bg-[#c4c4c4]" />
        <span className="grow pt-[1px] tracking-[-0.230px] text-[#7d7d7d]">
          <span className="text-[#2f7d43]">https</span>://<span className="text-black">whosonfirst.mapzen.com</span>
          /boundaryissues/id/85885859#13.645982624567438/37.7063/-122.4581
        </span>
        <svg className="mr-[12px] h-[30px] w-[30px]" viewBox="0 0 30 30">
          <path d="M15 3l3.400 8.300 9 .7-6.900 5.800 2.200 8.700L15 21.800 7.300 26.500l2.200-8.700L2.600 12l9-.7z" fill="none" stroke="#6a6a6a" strokeWidth="2.600" />
        </svg>
      </div>
      <div className="ml-[34px] flex flex-col gap-[4px]">
        <span className="h-[6px] w-[6px] rounded-full bg-[#5a5a5a]" />
        <span className="h-[6px] w-[6px] rounded-full bg-[#5a5a5a]" />
        <span className="h-[6px] w-[6px] rounded-full bg-[#5a5a5a]" />
      </div>
    </div>
  );
}

function Row({ name, value, locked, action }: { name: string; value: string; locked?: boolean; action?: string }) {
  return (
    <div className="mb-[2px] flex h-[82px] font-['DejaVu_Sans_Mono',monospace] text-[28px] text-[#2a1e3b]">
      <div className="w-[248px] bg-[#ededed] pl-[12px] leading-[80px]">{name}</div>
      <div className={`${locked ? "bg-[#dddddd]" : "bg-white"} ml-[20px] w-[354px] rounded-[8px] border-2 border-[#cccccc] pl-[8px] leading-[80px]`}>{value}</div>
      {action && <div className="ml-[13px] font-['Inter',sans-serif] text-[36px] leading-[80px] font-bold">{action}</div>}
    </div>
  );
}

function Page() {
  return (
    <div className="h-[1896px] overflow-hidden rounded-b-[8px] bg-white pl-[710px] text-[#2a1e3b]">
      <header className={`${UI} flex h-[429px] w-[1920px] items-start`}>
        <div className="mt-[121px] ml-[-2px] w-[379px] text-[36px] leading-[40px] font-light tracking-[0.400px] whitespace-nowrap text-[#f08080]">Boundary Issues</div>
        <div className="mt-[130px] flex text-[33px] leading-[40px] tracking-[1px] text-[#808080]">
          master
          <svg className="mt-[20px] ml-[12px] h-[8px] w-[16px]" viewBox="0 0 16 8"><path d="M0 0h16L8 8z" fill="#808080" /></svg>
        </div>
        <div className="mt-[148px] ml-auto w-[378px]">
          <div className="flex pl-[164px] text-[28px] leading-[40px] font-light tracking-[-1.800px] whitespace-nowrap text-[#f08080]">
            HI, STEPPS00
            <svg className="mt-[18px] ml-[11px] h-[8px] w-[16px]" viewBox="0 0 16 8"><path d="M0 0h16L8 8z" fill="#4f8ac9" /></svg>
          </div>
          <div className="mt-[52px] flex">
            <div className="h-[82px] w-[320px] rounded-[8px] border-2 border-[#cccccc] pl-[11px] font-['Open_Sans',sans-serif] text-[28px] leading-[78px] text-[#999999] shadow-[inset_0_2px_3px_rgba(0,0,0,0.08)]">Search for a place</div>
            <svg className="mt-[30px] ml-[10px] h-[16px] w-[16px]" viewBox="0 0 16 16"><path d="M8 0v16M0 8h16" stroke="#f08080" strokeWidth="3.600" /></svg>
          </div>
        </div>
      </header>
      <h1 className={`${UI} ml-[-2px] h-[90px] pt-[2px] text-[71px] leading-[90px] font-bold tracking-[1px] whitespace-nowrap`}>
        Edit<span className="ml-[17px] text-[#c66a5f]">Top of the Hill</span>
      </h1>
      <div className="mt-[30px] ml-[-1px] h-[40px] font-['Open_Sans',sans-serif] text-[27.200px] leading-[40px]">858/858/59/85885859.geojson</div>
      <div className="relative mt-[27px] h-[800px] w-[1920px] border-2 border-[#2a1e3b]">
        <CityMap />
        <div className="absolute top-[20px] left-[20px] w-[68px] rounded-[9px] border-4 border-black/20 bg-clip-padding">
          <div className="flex h-[60px] items-center justify-center rounded-t-[5px] border-b-2 border-[#cccccc] bg-white pt-[9px]">
            <svg width="26" height="26" viewBox="0 0 26 26"><path d="M13 1v24M1 13h24" stroke="#000" strokeWidth="4" /></svg>
          </div>
          <div className="flex h-[60px] items-center justify-center rounded-b-[5px] bg-white pt-[9px]">
            <svg width="26" height="26" viewBox="0 0 26 26"><path d="M1 13h24" stroke="#000" strokeWidth="4" /></svg>
          </div>
        </div>
        <div className="absolute top-[168px] left-[20px] flex h-[60px] w-[66px] items-center justify-center rounded-[9px] border-4 border-r-0 border-black/20 bg-white bg-clip-padding">
          <svg width="30" height="30" viewBox="0 0 30 30" fill="none" stroke="#333"><circle cx="13" cy="13" r="10.500" strokeWidth="3.600" /><path d="M20 20l8 7" strokeWidth="4.600" /></svg>
        </div>
        <div className="absolute right-0 bottom-0 h-[32px] w-[328px] bg-white/70 pl-[11px] font-['Liberation_Sans',sans-serif] text-[22px] leading-[34px] whitespace-nowrap text-[#333333]">
          <span className="text-[#2f78a8]">Leaflet</span> | Geocoding by <span className="text-[#2f78a8]">Mapzen</span>
        </div>
      </div>
      <div className="mt-[12px] ml-[-1px] flex h-[48px] w-[1920px] justify-between font-['Open_Sans',sans-serif] text-[32px] leading-[48px] whitespace-nowrap">
        <div>
          label centroid: <b className="tracking-[-0.050px]">37.715547, -122.457437</b>
          <b className="ml-[18px] text-[#f08080]">edit</b>
        </div>
        <div className="text-[22px] leading-[32px]">37.706273, -122.458141 #13.65</div>
      </div>
      <div className="mt-[95px] flex">
        <div className="w-[1319px]">
          <div className={`${UI} mb-[19px] ml-[-1px] flex h-[48px] items-baseline pt-[2px] text-[33px] leading-[48px] font-bold tracking-[0.500px] whitespace-nowrap`}>
            Minimum viable properties
            <span className="ml-[20px] text-[22px] tracking-[0.500px]">click to collapse</span>
          </div>
          <Row name="wof:id" value="85885859" locked />
          <Row name="wof:name" value="Top of the Hill" />
          <Row name="wof:parent_id" value="85922529" action="-" />
          <Row name="" value="" />
        </div>
        <div className={`${UI} pt-[62px] font-bold whitespace-nowrap`}>
          <h2 className="h-[60px] text-[49px] leading-[60px] tracking-[1.300px]">Hierarchy</h2>
          <div className="mt-[66px] h-[40px] pl-[46px] text-[27.500px] leading-[40px] tracking-[-0.300px]">REBUILD HIERARCHY</div>
          <h2 className="mt-[43px] h-[60px] text-[49px] leading-[60px] tracking-[1.300px]">Geometry</h2>
        </div>
      </div>
    </div>
  );
}

export default function App() {
  return (
    <div className="h-[2100px] w-[3360px] overflow-hidden bg-[#6ba7c1]">
      <MenuBar />
      <div className="flex h-[2044px]">
        <div className="w-[3338px] bg-[#c8c8c8]">
          <TabStrip />
          <Toolbar />
          <Page />
        </div>
        <div className="w-[22px] rounded-tr-[10px] rounded-br-[8px] bg-gradient-to-r from-[#b0b0b0] to-[#d4d4d4]">
          <div className="flex h-[73px] items-center rounded-tr-[10px] bg-gradient-to-b from-[#ececec] to-[#cfcfcf]">
            <div className="h-[18px] w-[3px] rounded-r-full bg-[#555555]" />
          </div>
          <div className="h-[1884px] border-t-2 border-b-2 border-[#8f8f8f]" />
        </div>
      </div>
      <div className={`${UI} flex h-[10px] overflow-hidden border-t border-black bg-[#2e4956] text-[26px] whitespace-nowrap`}>
        <div className="w-[1812px]" />
        <div className="flex w-[1540px] rounded-bl-[10px] bg-gradient-to-r from-[#4c4a4a] to-[#666666] text-[#1d1d1d]">
          <div className="mr-[12px] ml-[36px] w-[36px] border-x-2 border-[#333333]" />
          <div className="-mt-[5px] text-[28px] leading-[26px]">MacBook Pro</div>
        </div>
        <div className="grow bg-[#4f8199]" />
      </div>
    </div>
  );
}
